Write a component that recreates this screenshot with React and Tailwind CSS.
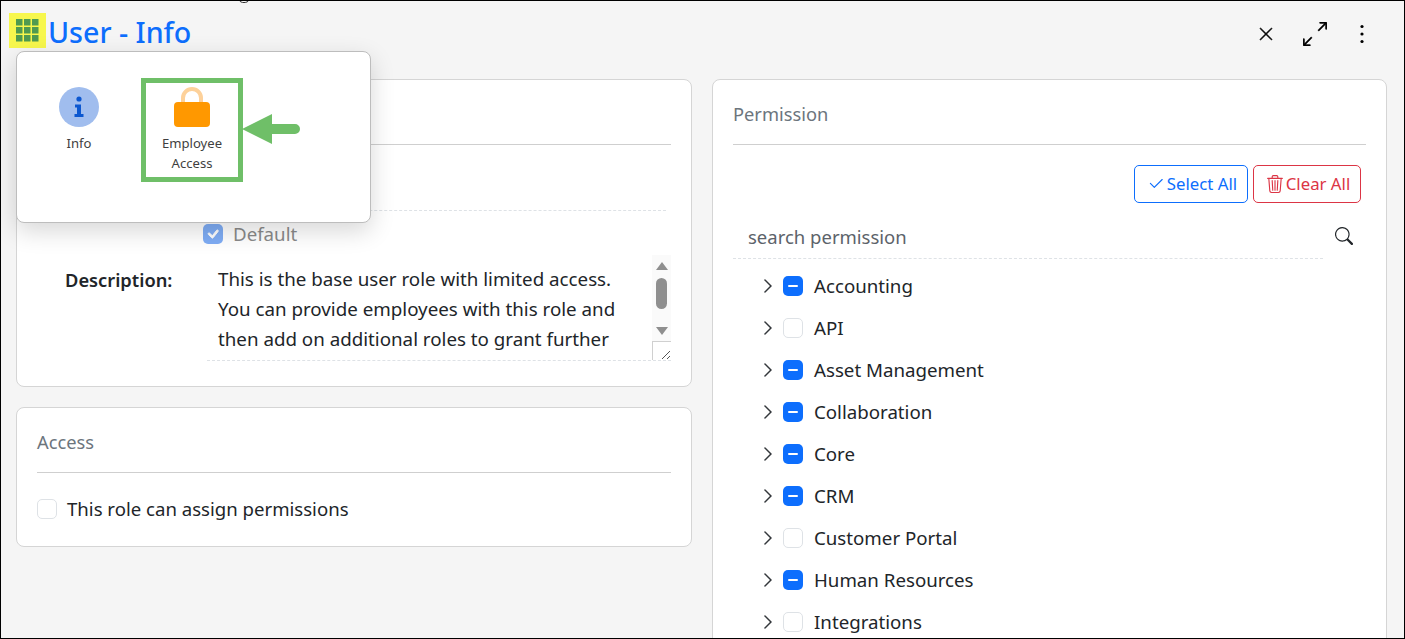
import React from "react";
import { BsArrowsAngleExpand, BsCheck2, BsTrash3, BsSearch, BsChevronRight, BsXLg, BsCheck } from "react-icons/bs";

const font = "font-['Noto_Sans','Open_Sans',sans-serif]";

const perms = [
  ["Accounting", true],
  ["API", false],
  ["Asset Management", true],
  ["Collaboration", true],
  ["Core", true],
  ["CRM", true],
  ["Customer Portal", false],
  ["Human Resources", true],
  ["Integrations", false],
];

function Row({ label, on }) {
  return (
    <div className="flex h-[42px] shrink-0 items-center">
      <BsChevronRight className="ml-[27px] h-4 w-4 text-[#212529]" strokeWidth="0.5" />
      {on ? (
        <span className="ml-[7px] flex h-5 w-5 items-center justify-center rounded-[5px] bg-[#0d6efd]">
          <span className="h-[2px] w-[10px] rounded-sm bg-white" />
        </span>
      ) : (
        <span className="ml-[7px] h-5 w-5 rounded-[5px] border border-[#dee2e6] bg-white" />
      )}
      <span className="ml-[11px] text-[18.7px] text-[#212529]">{label}</span>
    </div>
  );
}

function CardTitle({ children }) {
  return (
    <div className="flex h-[65px] items-center border-b border-[#cfcfcf] pt-[3px] text-[18.3px] text-[#6c757d]">
      {children}
    </div>
  );
}

export default function App() {
  return (
    <div className={`${font} relative h-[639px] overflow-hidden border border-black bg-[#f5f5f5]`}>
      <svg className="absolute left-[237px] top-[-1px]" width="12" height="4" viewBox="0 0 12 4">
        <path d="M1.5 0c0 3.4 9 3.4 9 0" fill="none" stroke="#333" strokeWidth="1" />
      </svg>

      <header className="flex h-[78px] items-start">
        <div className="ml-[8px] mt-[12px] flex h-[35px] w-[37px] items-center justify-center bg-[#f7f74d]">
          <svg width="23" height="23" viewBox="0 0 23 23" fill="#4f9a50">
            <rect x="0" y="0" width="6.5" height="6.5" />
            <rect x="8" y="0" width="6.5" height="6.5" />
            <rect x="16" y="0" width="6.5" height="6.5" />
            <rect x="0" y="8" width="6.5" height="6.5" />
            <rect x="8" y="8" width="6.5" height="6.5" />
            <rect x="16" y="8" width="6.5" height="6.5" />
            <rect x="0" y="16" width="6.5" height="6.5" />
            <rect x="8" y="16" width="6.5" height="6.5" />
            <rect x="16" y="16" width="6.5" height="6.5" />
          </svg>
        </div>
        <h1 className="ml-[2px] mt-[11px] text-[28.6px] font-medium leading-[40px] text-[#0d6efd]">User - Info</h1>
        <div className="ml-auto mr-[30px] mt-[21px] flex items-center text-black">
          <BsXLg className="h-4 w-4" strokeWidth="0.6" />
          <BsArrowsAngleExpand className="ml-[29px] h-6 w-6" strokeWidth="0.3" />
          <svg className="ml-[23px]" width="24" height="24" viewBox="0 0 24 24" fill="currentColor">
            <circle cx="12" cy="4.5" r="1.6" />
            <circle cx="12" cy="12" r="1.6" />
            <circle cx="12" cy="19.5" r="1.6" />
          </svg>
        </div>
      </header>

      <div className="flex gap-5 pl-[15px] pr-[17px]">
        <div className="flex w-[676px] shrink-0 flex-col gap-5">
          <section className="h-[308px] rounded-lg border border-[#d5d5d5] bg-white px-5">
            <CardTitle>Info</CardTitle>
            <div className="flex h-[66px] items-end pl-[168px] pr-[5px]">
              <div className="h-px w-full border-b border-dashed border-[#dee2e6]" />
            </div>
            <label className="ml-[166px] mt-[10px] flex items-center gap-[10px] text-[18.7px] leading-[26px] text-[#8a8a8a]">
              <span className="flex h-5 w-5 items-center justify-center rounded-[5px] bg-[#7fadf5]">
                <BsCheck className="h-5 w-5 text-white" strokeWidth="0.8" />
              </span>
              Default
            </label>
            <div className="mt-[9px] flex">
              <div className="w-[170px] pl-[28px] pt-[9px] text-[18.3px] font-semibold leading-[30px] text-[#212529]">Description:</div>
              <div className="relative h-[105px] w-[464px] border-b border-dashed border-[#dee2e6] pl-[11px]">
                <p className="w-[415px] pt-[8px] text-[18.75px] leading-[30px] text-[#212529]">
                  This is the base user role with limited access. You can provide employees with this role and then add on additional roles to grant further
                </p>
                <div className="absolute bottom-0 right-0 flex h-[105px] w-[19px] flex-col items-center bg-[#fafafa] pt-[7px]">
                  <span className="h-0 w-0 border-x-[6.5px] border-b-[8px] border-x-transparent border-b-[#8f8f8f]" />
                  <span className="mt-[8px] h-[31px] w-[11px] rounded-full bg-[#8f8f8f]" />
                  <span className="mt-[18px] h-0 w-0 border-x-[6.5px] border-t-[8px] border-x-transparent border-t-[#8f8f8f]" />
                  <span className="absolute bottom-0 right-0 flex h-[19px] w-[19px] items-end justify-end border-l border-t border-[#d0d0d0] bg-white">
                    <svg width="10" height="10" viewBox="0 0 10 10" stroke="#555" strokeWidth="1">
                      <path d="M1 9 9 1M6 9l3-3" />
                    </svg>
                  </span>
                </div>
              </div>
            </div>
          </section>

          <section className="h-[140px] rounded-lg border border-[#d5d5d5] bg-white px-5">
            <CardTitle>Access</CardTitle>
            <label className="mt-[23px] flex items-center gap-[10px] text-[18.6px] leading-[26px] text-[#212529]">
              <span className="h-5 w-5 rounded-[5px] border border-[#dee2e6] bg-white" />
              This role can assign permissions
            </label>
          </section>
        </div>

        <section className="flex h-[620px] min-w-0 flex-1 flex-col rounded-lg border border-[#d5d5d5] bg-white px-5">
          <CardTitle>Permission</CardTitle>
          <div className="mt-5 flex justify-end gap-[5px] pr-[5px]">
            <button className="flex h-[38px] w-[114px] items-center justify-center gap-[2px] rounded-[5px] border border-[#0d6efd] pl-[2px] text-[16.8px] text-[#0d6efd]">
              <BsCheck2 className="h-[18px] w-[18px]" />
              Select All
            </button>
            <button className="flex h-[38px] w-[108px] items-center justify-center gap-[2px] rounded-[5px] border border-[#dc3545] pl-[2px] text-[16.8px] text-[#dc3545]">
              <BsTrash3 className="h-[18px] w-[18px]" />
              Clear All
            </button>
          </div>
          <div className="mt-[14px] flex items-center">
            <div className="flex h-[42px] w-[590px] items-center border-b border-dashed border-[#dee2e6] pb-[2px] pl-[15px] text-[18.5px] text-[#5c636a]">
              search permission
            </div>
            <BsSearch className="ml-[12px] mt-[-4px] h-[18px] w-[18px] text-[#212529]" />
          </div>
          <div className="mt-[6px] flex flex-col">
            {perms.map(([l, on]) => (
              <Row key={l} label={l} on={on} />
            ))}
          </div>
        </section>
      </div>

      <div className="absolute left-[15px] top-[50px] h-[172px] w-[355px] rounded-lg border border-[#bdbdbd] bg-white shadow-[0_8px_24px_rgba(0,0,0,0.16)]">
        <div className="flex items-start">
          <div className="ml-[22px] mt-[35px] flex w-[80px] flex-col items-center text-[13.1px] text-[#3f3f3f]">
            <svg width="40" height="40" viewBox="0 0 40 40">
              <circle cx="20" cy="20" r="20" fill="#a0bdee" />
              <circle cx="20" cy="12" r="2.6" fill="#0b57d0" />
              <path d="M16 17.5h6V27h2.5v3h-9v-3H18v-6.5h-2z" fill="#0b57d0" />
            </svg>
            <span className="mt-[6px] leading-5">Info</span>
          </div>
          <div className="ml-[22px] mt-[26px] flex h-[104px] w-[102px] flex-col items-center border-[5px] border-[#6fbf68] pt-[4px] text-center text-[13.1px] leading-5 text-[#3f3f3f]">
            <svg width="36" height="40" viewBox="0 0 36 40">
              <path d="M9 18V11a9 9 0 0 1 18 0v7" fill="none" stroke="#fdd19a" strokeWidth="4" />
              <rect x="0" y="15" width="36" height="25" rx="4" fill="#ff9800" />
            </svg>
            <span className="mt-[6px]">Employee<br />Access</span>
          </div>
          <svg className="ml-[-1px] mt-[62px]" width="58" height="30" viewBox="0 0 58 30">
            <path d="M0 15 30 0v10h23a5 5 0 0 1 0 10H30v10z" fill="#6fbf68" />
          </svg>
        </div>
      </div>
    </div>
  );
}
